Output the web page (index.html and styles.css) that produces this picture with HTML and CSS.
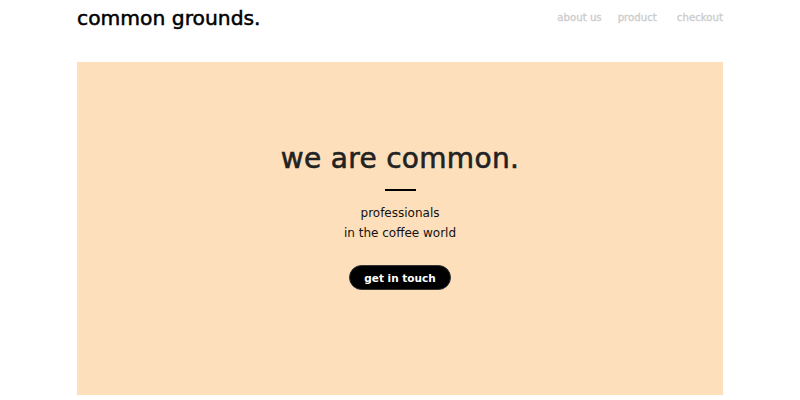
FILE: index.html
```html
<!DOCTYPE html>
<html>
<head>
<meta charset="utf-8">
<link rel="stylesheet" href="styles.css">
</head>
<body>
<div class="page">
  <header class="top">
    <div class="logo">common grounds.</div>
    <nav class="nav">
      <a href="#">about us</a>
      <a href="#">product</a>
      <a href="#">checkout</a>
    </nav>
  </header>
  <section class="hero">
    <h1 class="title">we are common.</h1>
    <div class="rule"></div>
    <p class="sub">professionals<br>in the coffee world</p>
    <a class="btn" href="#">get in touch</a>
  </section>
</div>
</body>
</html>
```
FILE: styles.css
```css
* { box-sizing: border-box; }
html, body { margin: 0; padding: 0; background: #fff; }
body { font-family: "DejaVu Sans", sans-serif; color: #111; }
.page { width: 646px; margin: 0 auto; }
.top { display: flex; justify-content: space-between; align-items: flex-start; height: 62px; }
.logo { font-size: 20.3px; line-height: 24px; margin-top: 6px; color: #000; -webkit-text-stroke: 0.5px #000; }
.nav { display: flex; gap: 16px; margin-top: 10px; }
.nav a { color: #cccccc; text-decoration: none; font-size: 10.2px; line-height: 16px; -webkit-text-stroke: 0.3px #cccccc; }
.nav a:last-child { margin-left: 4px; }
.hero { background: #fddfbb; height: 333px; display: flex; flex-direction: column; align-items: center; padding-top: 80px; }
.title { margin: 0; font-weight: normal; font-size: 28px; line-height: 34px; color: #222; letter-spacing: 0.3px; -webkit-text-stroke: 0.6px #222; }
.rule { width: 31px; height: 2px; background: #000; margin-top: 13px; }
.sub { margin: 12px 0 0; text-align: center; font-size: 12px; line-height: 20px; color: #111; }
.btn { margin-top: 22px; background: #000; color: #fff; text-decoration: none; font-weight: bold; font-size: 10.5px; width: 102px; height: 25px; border-radius: 13px; display: flex; align-items: center; justify-content: center; border: 1px solid #333; }
```
